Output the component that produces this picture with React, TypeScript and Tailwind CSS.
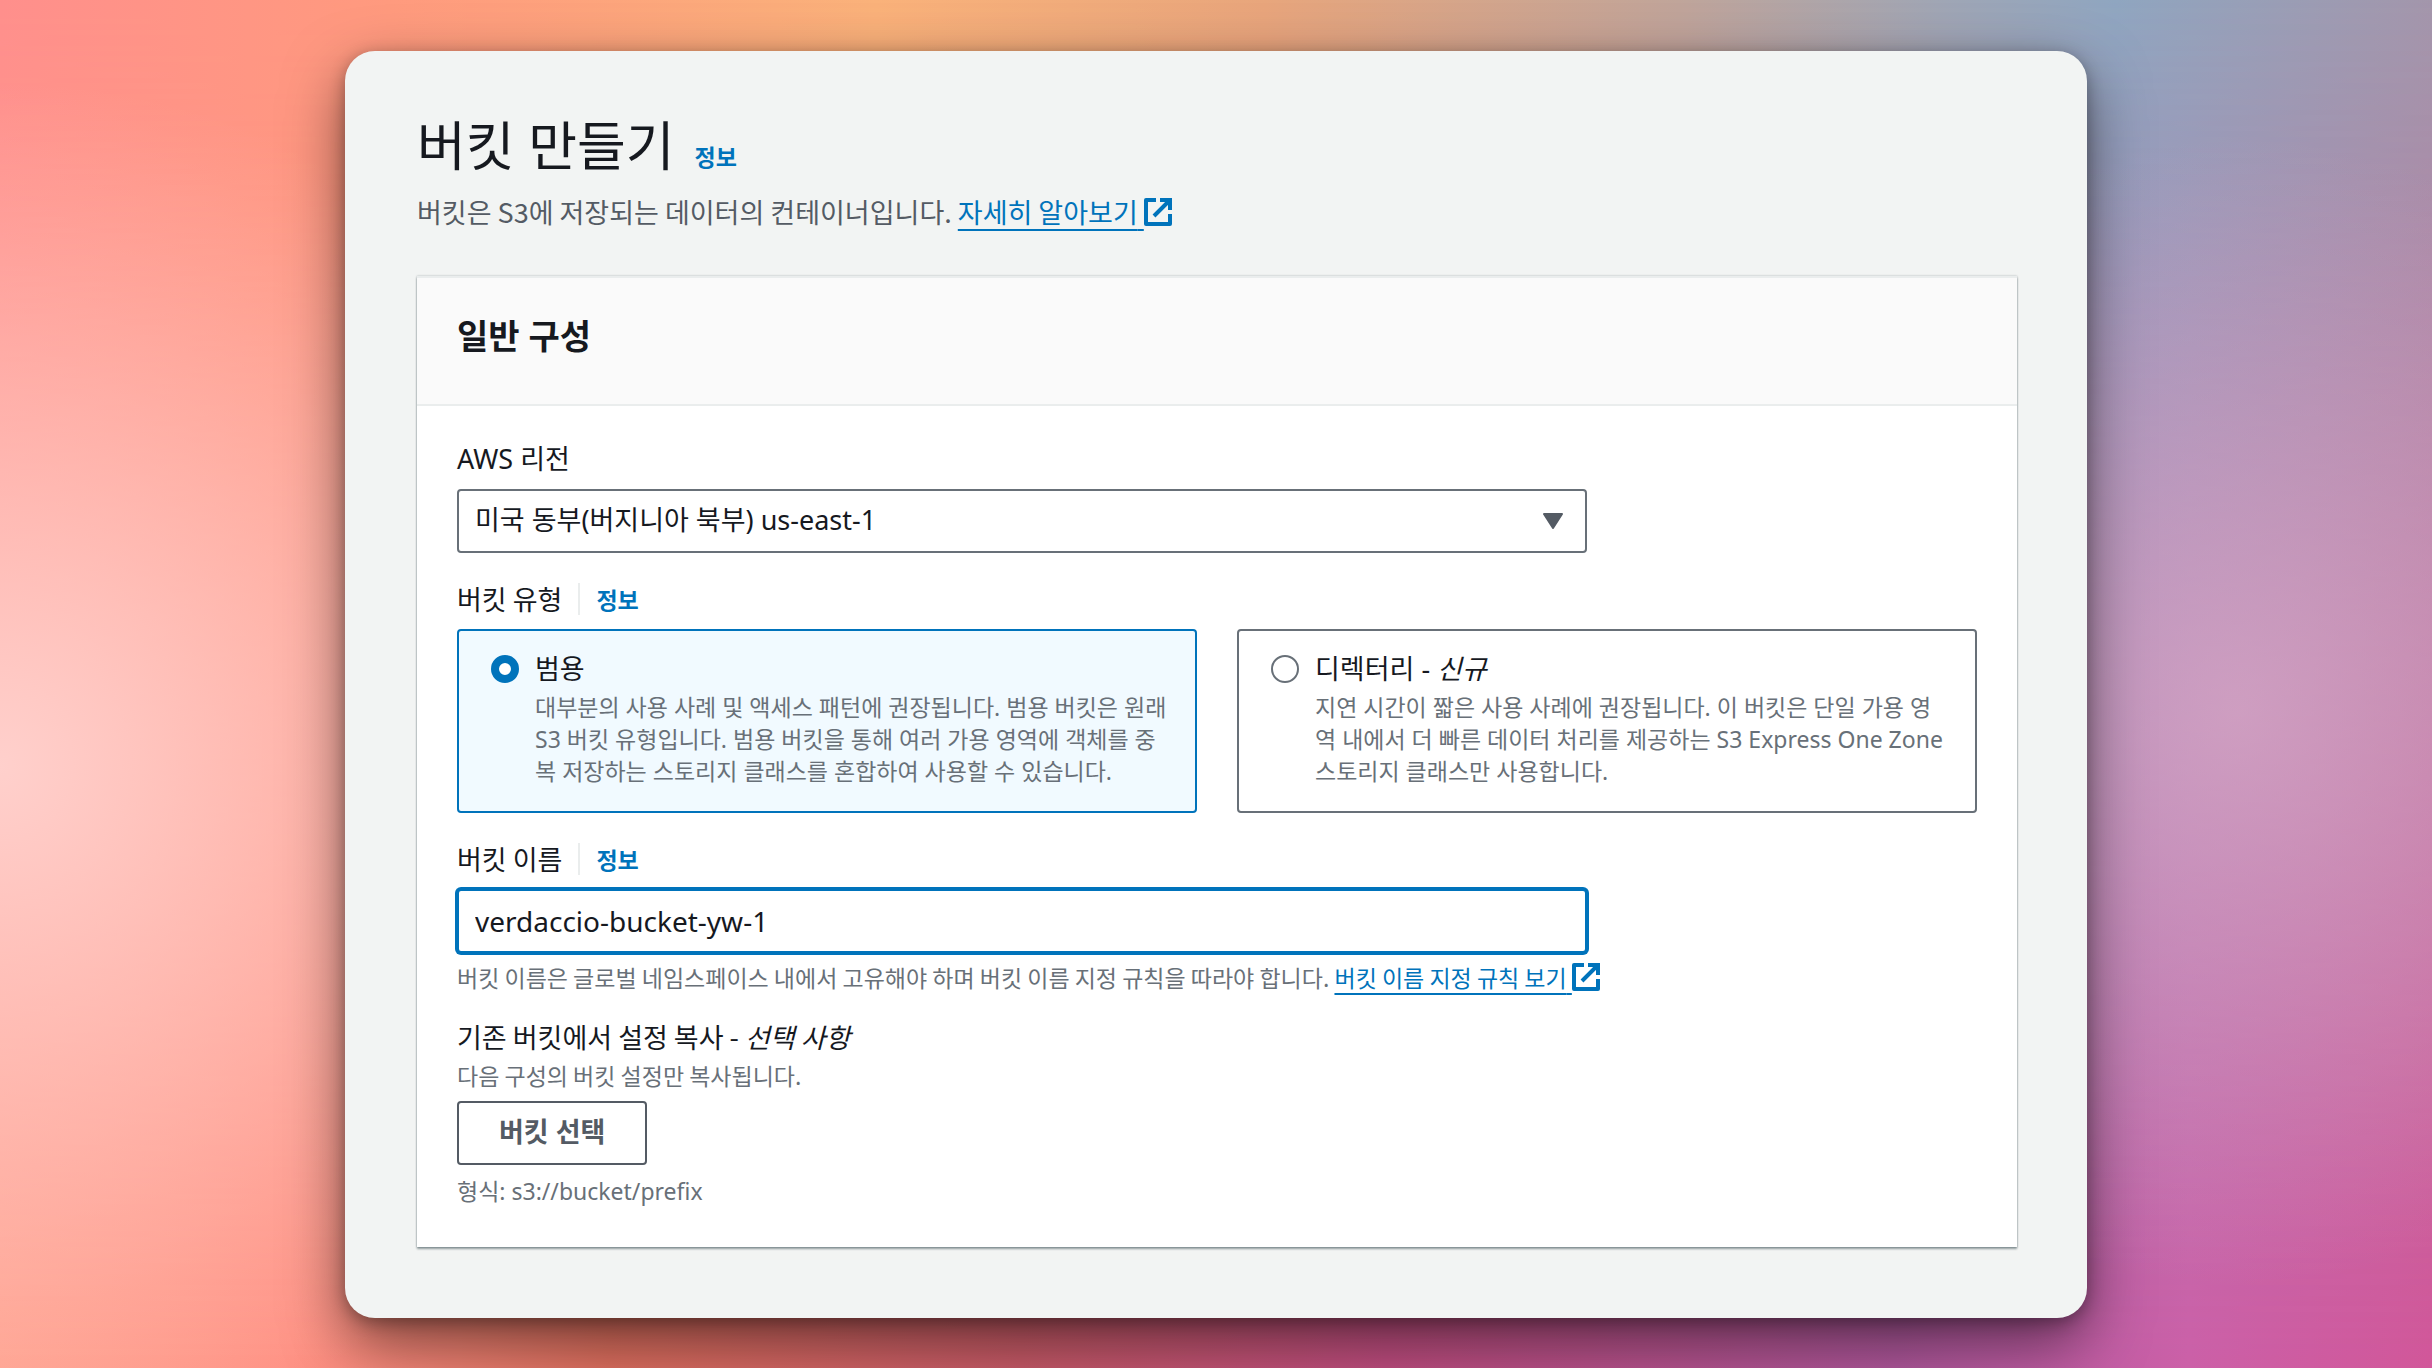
import React, { useState } from "react";

interface BucketType {
  id: string;
  title: string;
  note?: string;
  description: string;
}

const bucketTypes: BucketType[] = [
  {
    id: "general",
    title: "범용",
    description:
      "대부분의 사용 사례 및 액세스 패턴에 권장됩니다. 범용 버킷은 원래 S3 버킷 유형입니다. 범용 버킷을 통해 여러 가용 영역에 객체를 중복 저장하는 스토리지 클래스를 혼합하여 사용할 수 있습니다.",
  },
  {
    id: "directory",
    title: "디렉터리",
    note: "신규",
    description:
      "지연 시간이 짧은 사용 사례에 권장됩니다. 이 버킷은 단일 가용 영역 내에서 더 빠른 데이터 처리를 제공하는 S3 Express One Zone 스토리지 클래스만 사용합니다.",
  },
];

const Backdrop: React.FC = () => (
  <div className="absolute inset-0 -z-10 bg-[linear-gradient(90deg,#ffa28f_0%,#ff9284_12%,#e07060_25%,#c85a68_42%,#c04d80_57%,#b0579c_78%,#cc60a8_90%,#d2579a_100%)]">
    <div className="absolute inset-0 bg-[linear-gradient(90deg,#ff8f8c_0%,#ff9a7e_16%,#fab27a_36%,#e8a67c_52%,#c0a59a_69%,#9fa6b5_80%,#8fa6c0_87%,#a396ab_100%)] mask-b-from-0% mask-b-to-100%" />
    <div className="absolute inset-0 bg-[radial-gradient(ellipse_28%_50%_at_0%_56%,#ffd0cc_0%,#ffd0cc00_100%),radial-gradient(ellipse_22%_42%_at_92%_52%,#dcaecaaa_0%,#dcaeca00_100%)]" />
  </div>
);

const ExternalIcon: React.FC = () => (
  <svg viewBox="0 0 28 28" aria-hidden="true" className="size-7 shrink-0 fill-none stroke-[#0073bb] stroke-4">
    <path d="M12 2H2v24h24V16" strokeLinejoin="round" />
    <path d="M16 2h10v10M25 3L10 18" />
  </svg>
);

interface ExternalLinkProps {
  children: React.ReactNode;
}

const ExternalLink: React.FC<ExternalLinkProps> = ({ children }) => (
  <a href="#" className="inline-flex items-center leading-8 text-[#0073bb]">
    <span className="whitespace-pre underline decoration-2 underline-offset-6">{children} </span>
    <ExternalIcon />
  </a>
);

const InfoLink: React.FC = () => (
  <a href="#" className="text-[23px] leading-8 font-bold text-[#0073bb]">
    정보
  </a>
);

interface BucketTypeCardProps {
  type: BucketType;
  checked: boolean;
  onSelect: (id: string) => void;
}

const BucketTypeCard: React.FC<BucketTypeCardProps> = ({ type, checked, onSelect }) => {
  return (
    <label
      className={`flex gap-4 min-h-[184px] rounded-sm border-2 pl-8 pr-7 pt-4 pb-6 cursor-pointer ${checked ? "border-[#0073bb] bg-[#f1faff]" : "border-[#687078] bg-white"}`}
    >
      <input
        type="radio"
        name="bucket-type"
        checked={checked}
        onChange={() => onSelect(type.id)}
        className="appearance-none mt-2 size-7 shrink-0 rounded-full border-2 border-[#687078] bg-white checked:border-8 checked:border-[#0073bb]"
      />
      <span className="flex-1">
        <span className="block text-[27px] leading-[44px] text-[#16191f]">
          {type.title}
          {type.note && (
            <>
              {" - "}
              <i>{type.note}</i>
            </>
          )}
        </span>
        <span className="block text-[23px] leading-8 text-[#687078]">{type.description}</span>
      </span>
    </label>
  );
};

const App: React.FC = () => {
  const [selectedType, setSelectedType] = useState("general");
  const [bucketName, setBucketName] = useState("verdaccio-bucket-yw-1");

  return (
    <div className="relative isolate flex min-h-screen items-center justify-center overflow-hidden py-12 font-['Noto_Sans','Noto_Sans_CJK_KR',sans-serif] text-[#16191f]">
      <Backdrop />
      <main className="w-full max-w-[1742px] rounded-[30px] bg-[#f2f4f3] pt-[59px] pr-[70px] pb-[71px] pl-[72px] shadow-[0_24px_60px_rgba(0,0,0,0.5),0_4px_16px_rgba(0,0,0,0.3)]">
        <header>
          <div className="flex items-baseline gap-5">
            <h1 className="text-[53px] leading-[72px]">버킷 만들기</h1>
            <InfoLink />
          </div>
          <p className="mt-2 font-['Noto_Sans_CJK_KR',sans-serif] text-[27px] leading-[44px] text-[#545b64]">
            버킷은 S3에 저장되는 데이터의 컨테이너입니다. <ExternalLink>자세히 알아보기</ExternalLink>
          </p>
        </header>

        <section className="mt-[42px] border-t-2 border-[#eaeded] bg-white shadow-[0_2px_2px_rgba(0,28,36,0.4),0_0_2px_rgba(0,28,36,0.3)]">
          <div className="border-b-2 border-[#eaeded] bg-[#fafafa] px-10 pt-9 pb-[46px]">
            <h2 className="text-[34px] leading-[44px] font-bold">일반 구성</h2>
          </div>

          <form className="px-10 pt-[31px] pb-10" onSubmit={(e) => e.preventDefault()}>
            <label htmlFor="region" className="block text-[27px] leading-[44px]">
              AWS 리전
            </label>
            <div className="relative mt-2 max-w-[1130px]">
              <select
                id="region"
                className="block h-16 w-full appearance-none rounded-sm border-2 border-[#687078] bg-white px-4 text-[27px]"
              >
                <option>미국 동부(버지니아 북부) us-east-1</option>
              </select>
              <svg
                viewBox="0 0 20 16"
                aria-hidden="true"
                className="pointer-events-none absolute top-6 right-6 h-4 w-5 fill-[#545b64] stroke-[#545b64] stroke-2"
              >
                <path d="M1 1h18l-9 14z" strokeLinejoin="round" />
              </svg>
            </div>

            <div role="radiogroup" aria-labelledby="bucket-type-label" className="mt-6">
              <div className="flex items-center gap-4 font-['Noto_Sans_CJK_KR',sans-serif]">
                <span id="bucket-type-label" className="text-[27px] leading-[44px]">
                  버킷 유형
                </span>
                <span className="h-8 border-l-2 border-[#eaeded] pl-4">
                  <InfoLink />
                </span>
              </div>
              <div className="mt-2 grid grid-cols-2 gap-10">
                {bucketTypes.map((type) => (
                  <BucketTypeCard
                    key={type.id}
                    type={type}
                    checked={selectedType === type.id}
                    onSelect={setSelectedType}
                  />
                ))}
              </div>
            </div>

            <div className="mt-6 flex items-center gap-4 font-['Noto_Sans_CJK_KR',sans-serif]">
              <label htmlFor="bucket-name" className="text-[27px] leading-[44px]">
                버킷 이름
              </label>
              <span className="h-8 border-l-2 border-[#eaeded] pl-4">
                <InfoLink />
              </span>
            </div>
            <input
              id="bucket-name"
              type="text"
              value={bucketName}
              onChange={(e) => setBucketName(e.target.value)}
              className="mt-2 block h-16 w-full max-w-[1130px] rounded-sm border-2 border-[#0073bb] bg-white px-4 text-[28px] ring-2 ring-[#0073bb] outline-none"
            />
            <p className="mt-2 font-['Noto_Sans_CJK_KR',sans-serif] text-[23px] leading-8 text-[#687078]">
              버킷 이름은 글로벌 네임스페이스 내에서 고유해야 하며 버킷 이름 지정 규칙을 따라야 합니다.{" "}
              <ExternalLink>버킷 이름 지정 규칙 보기</ExternalLink>
            </p>

            <h3 className="mt-[22px] font-['Noto_Sans_CJK_KR',sans-serif] text-[27px] leading-[44px]">
              기존 버킷에서 설정 복사 - <i>선택 사항</i>
            </h3>
            <p className="font-['Noto_Sans_CJK_KR',sans-serif] text-[23px] leading-8 text-[#687078]">
              다음 구성의 버킷 설정만 복사됩니다.
            </p>
            <button
              type="button"
              className="mt-2.5 block h-16 rounded-sm border-2 border-[#545b64] bg-white px-10 text-[27px] font-bold text-[#545b64] cursor-pointer"
            >
              버킷 선택
            </button>
            <p className="mt-2.5 text-[23px] leading-8 text-[#687078]">형식: s3://bucket/prefix</p>
          </form>
        </section>
      </main>
    </div>
  );
};

export default App;
